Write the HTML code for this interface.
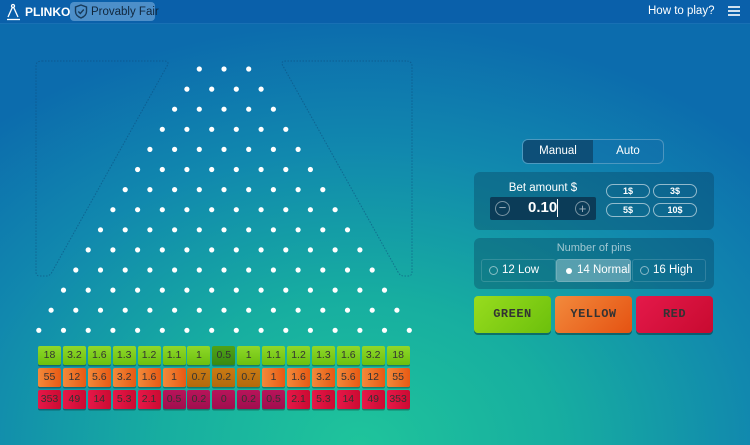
<!DOCTYPE html>
<html><head><meta charset="utf-8"><style>
*{margin:0;padding:0;box-sizing:border-box}
body{width:750px;height:445px;overflow:hidden;font-family:"Liberation Sans",sans-serif;position:relative;
background:radial-gradient(ellipse 75% 95% at 48% 100%,#1fc49b 0%,#17aea0 35%,#1188ae 70%,#0c6cad 100%);}
.top{position:absolute;left:0;top:0;width:750px;height:24px;background:#0a60aa;border-bottom:1px solid #1870b4}
.abs{position:absolute;white-space:nowrap}
.cell{position:absolute;width:23px;height:19px;border-radius:2px;font-size:10.5px;line-height:19px;text-align:center;color:#333;box-shadow:0 1.5px 0 rgba(0,0,0,.3)}
.g{background:linear-gradient(#8fd82a,#6cc00e)}
.gd{background:linear-gradient(#4ea218,#3a8a10)}
.o{background:linear-gradient(90deg,#f2893a,#e85a14)}
.od{background:linear-gradient(#c97a14,#b46a0c)}
.r{background:linear-gradient(90deg,#e61848,#cc0a32)}
.rd{background:linear-gradient(#b8145a,#a00e4e)}
.panel{position:absolute;background:rgba(10,60,90,.35);border-radius:6px}
.chip{position:absolute;width:44px;height:14px;border:1px solid rgba(255,255,255,.55);border-radius:8px;color:#fff;font-size:9px;font-weight:bold;text-align:center;line-height:12px}
.opt{position:absolute;top:259px;height:23px;border:1px solid rgba(255,255,255,.15);border-radius:3px;color:#fff;font-size:11.5px;line-height:21px;padding-left:20px;white-space:nowrap}
.opt i{position:absolute;left:7px;top:6px;width:9px;height:9px;border:1px solid rgba(255,255,255,.5);border-radius:50%}
.btn{position:absolute;top:296px;width:77px;height:37px;border-radius:4px;font-family:"Liberation Mono",monospace;font-weight:bold;font-size:12px;letter-spacing:.5px;text-align:center;line-height:36px;color:#333;box-shadow:0 2px 0 rgba(0,0,0,.35)}
</style></head><body>
<div class="top"></div>
<svg class="abs" style="left:5px;top:3px" width="18" height="18" viewBox="0 0 18 18" fill="none" stroke="#fff" stroke-width="1.3"><path d="M3 14 L8 3 L13 14"/><circle cx="8" cy="3" r="1.5" fill="#0a60aa"/><path d="M2 16.5 H15"/></svg>
<div class="abs" style="left:25px;top:5px;color:#fff;font-size:12px;font-weight:bold">PLINKO</div>
<div class="abs" style="left:70px;top:2px;width:85px;height:19px;background:#4d8fc9;border-radius:4px"></div>
<svg class="abs" style="left:74px;top:4px" width="14" height="15" viewBox="0 0 14 15" fill="none" stroke="#173a5a" stroke-width="1.4"><path d="M7 1 L12.5 3 V7.5 C12.5 10.5 10 12.8 7 14 C4 12.8 1.5 10.5 1.5 7.5 V3 Z"/><path d="M4.3 7.5 L6.3 9.5 L9.8 5.5"/></svg>
<div class="abs" style="left:91px;top:6px;color:#10263c;font-size:11.5px">Provably Fair</div>
<div class="abs" style="left:648px;top:5px;color:#fff;font-size:11.5px">How to play?</div>
<div class="abs" style="left:728px;top:6px;width:12px;height:1.5px;background:#cfe0ee;box-shadow:0 4px 0 #cfe0ee,0 8px 0 #cfe0ee"></div>

<svg class="abs" style="left:0;top:0" width="450" height="345">
<g fill="none" stroke="#0d4a7a" stroke-width="1" stroke-dasharray="1.5 1.5" opacity=".55">
<path d="M42 61 H164 Q170 61 167 66 L52 272 Q50 276 46 276 H40 Q36 276 36 272 V66 Q36 61 42 61Z"/>
<path d="M406 61 H286 Q280 61 283 66 L398 272 Q400 276 404 276 H408 Q412 276 412 272 V66 Q412 61 406 61Z"/>
</g>
<g fill="#fff" id="pins"></g>
</svg>
<div id="cells"></div>

<div class="panel" style="left:522px;top:139px;width:142px;height:25px;border:1px solid rgba(255,255,255,.25);background:rgba(20,110,170,.5)"></div>
<div class="abs" style="left:523px;top:140px;width:70px;height:23px;background:#0d4f78;border-radius:5px 0 0 5px"></div>
<div class="abs" style="left:523px;top:145px;width:70px;text-align:center;color:#fff;font-size:11.5px">Manual</div>
<div class="abs" style="left:593px;top:145px;width:70px;text-align:center;color:#fff;font-size:11.5px">Auto</div>

<div class="panel" style="left:474px;top:172px;width:240px;height:58px"></div>
<div class="abs" style="left:490px;top:182px;width:106px;text-align:center;color:#fff;font-size:11.5px">Bet amount $</div>
<div class="abs" style="left:490px;top:197px;width:106px;height:23px;background:#0b3c58;border-radius:2px"></div>
<div class="abs" style="left:495px;top:201px;width:15px;height:15px;border:1px solid rgba(255,255,255,.45);border-radius:50%;color:rgba(255,255,255,.6);font-size:13px;line-height:12px;text-align:center">−</div>
<div class="abs" style="left:575px;top:201px;width:15px;height:15px;border:1px solid rgba(255,255,255,.45);border-radius:50%;color:rgba(255,255,255,.6);font-size:13px;line-height:13px;text-align:center">+</div>
<div class="abs" style="left:528px;top:199px;color:#fff;font-size:15px;font-weight:bold">0.10</div>
<div class="abs" style="left:557px;top:199px;width:1px;height:18px;background:#fff"></div>
<div class="chip" style="left:606px;top:184px">1$</div>
<div class="chip" style="left:653px;top:184px">3$</div>
<div class="chip" style="left:606px;top:203px">5$</div>
<div class="chip" style="left:653px;top:203px">10$</div>

<div class="panel" style="left:474px;top:238px;width:240px;height:51px"></div>
<div class="abs" style="left:474px;top:242px;width:240px;text-align:center;color:rgba(255,255,255,.6);font-size:11px">Number of pins</div>
<div class="opt" style="left:481px;width:75px"><i></i>12 Low</div>
<div class="opt" style="left:556px;width:75px;background:rgba(255,255,255,.3)"><i style="border:none;background:#fff;width:6px;height:6px;left:9px;top:8px"></i>14 Normal</div>
<div class="opt" style="left:632px;width:74px"><i></i>16 High</div>

<div class="btn" style="left:474px;background:linear-gradient(135deg,#98dc1e,#6cc00c)">GREEN</div>
<div class="btn" style="left:555px;background:linear-gradient(135deg,#f28a3c,#e55212)">YELLOW</div>
<div class="btn" style="left:636px;background:linear-gradient(135deg,#e4194a,#c80a30)">RED</div>

<script>
var g=document.getElementById('pins'),s='';
for(var r=0;r<14;r++){var n=r+3,y=69+r*20.1;for(var k=0;k<n;k++){var x=224+(k-(n-1)/2)*24.7;s+='<circle cx="'+x.toFixed(1)+'" cy="'+y.toFixed(1)+'" r="2.6"/>';}}
g.innerHTML=s;
var rows=[["18","3.2","1.6","1.3","1.2","1.1","1","0.5","1","1.1","1.2","1.3","1.6","3.2","18"],
["55","12","5.6","3.2","1.6","1","0.7","0.2","0.7","1","1.6","3.2","5.6","12","55"],
["353","49","14","5.3","2.1","0.5","0.2","0","0.2","0.5","2.1","5.3","14","49","353"]];
var cls=[function(i){return i==7?'gd':'g'},function(i){return (i>=6&&i<=8)?'od':'o'},function(i){return (i>=5&&i<=9)?'rd':'r'}];
var tops=[346,368,390],h='';
for(var r=0;r<3;r++)for(var i=0;i<15;i++){h+='<div class="cell '+cls[r](i)+'" style="left:'+(38+i*24.9).toFixed(1)+'px;top:'+tops[r]+'px">'+rows[r][i]+'</div>';}
document.getElementById('cells').innerHTML=h;
</script>
</body></html>
